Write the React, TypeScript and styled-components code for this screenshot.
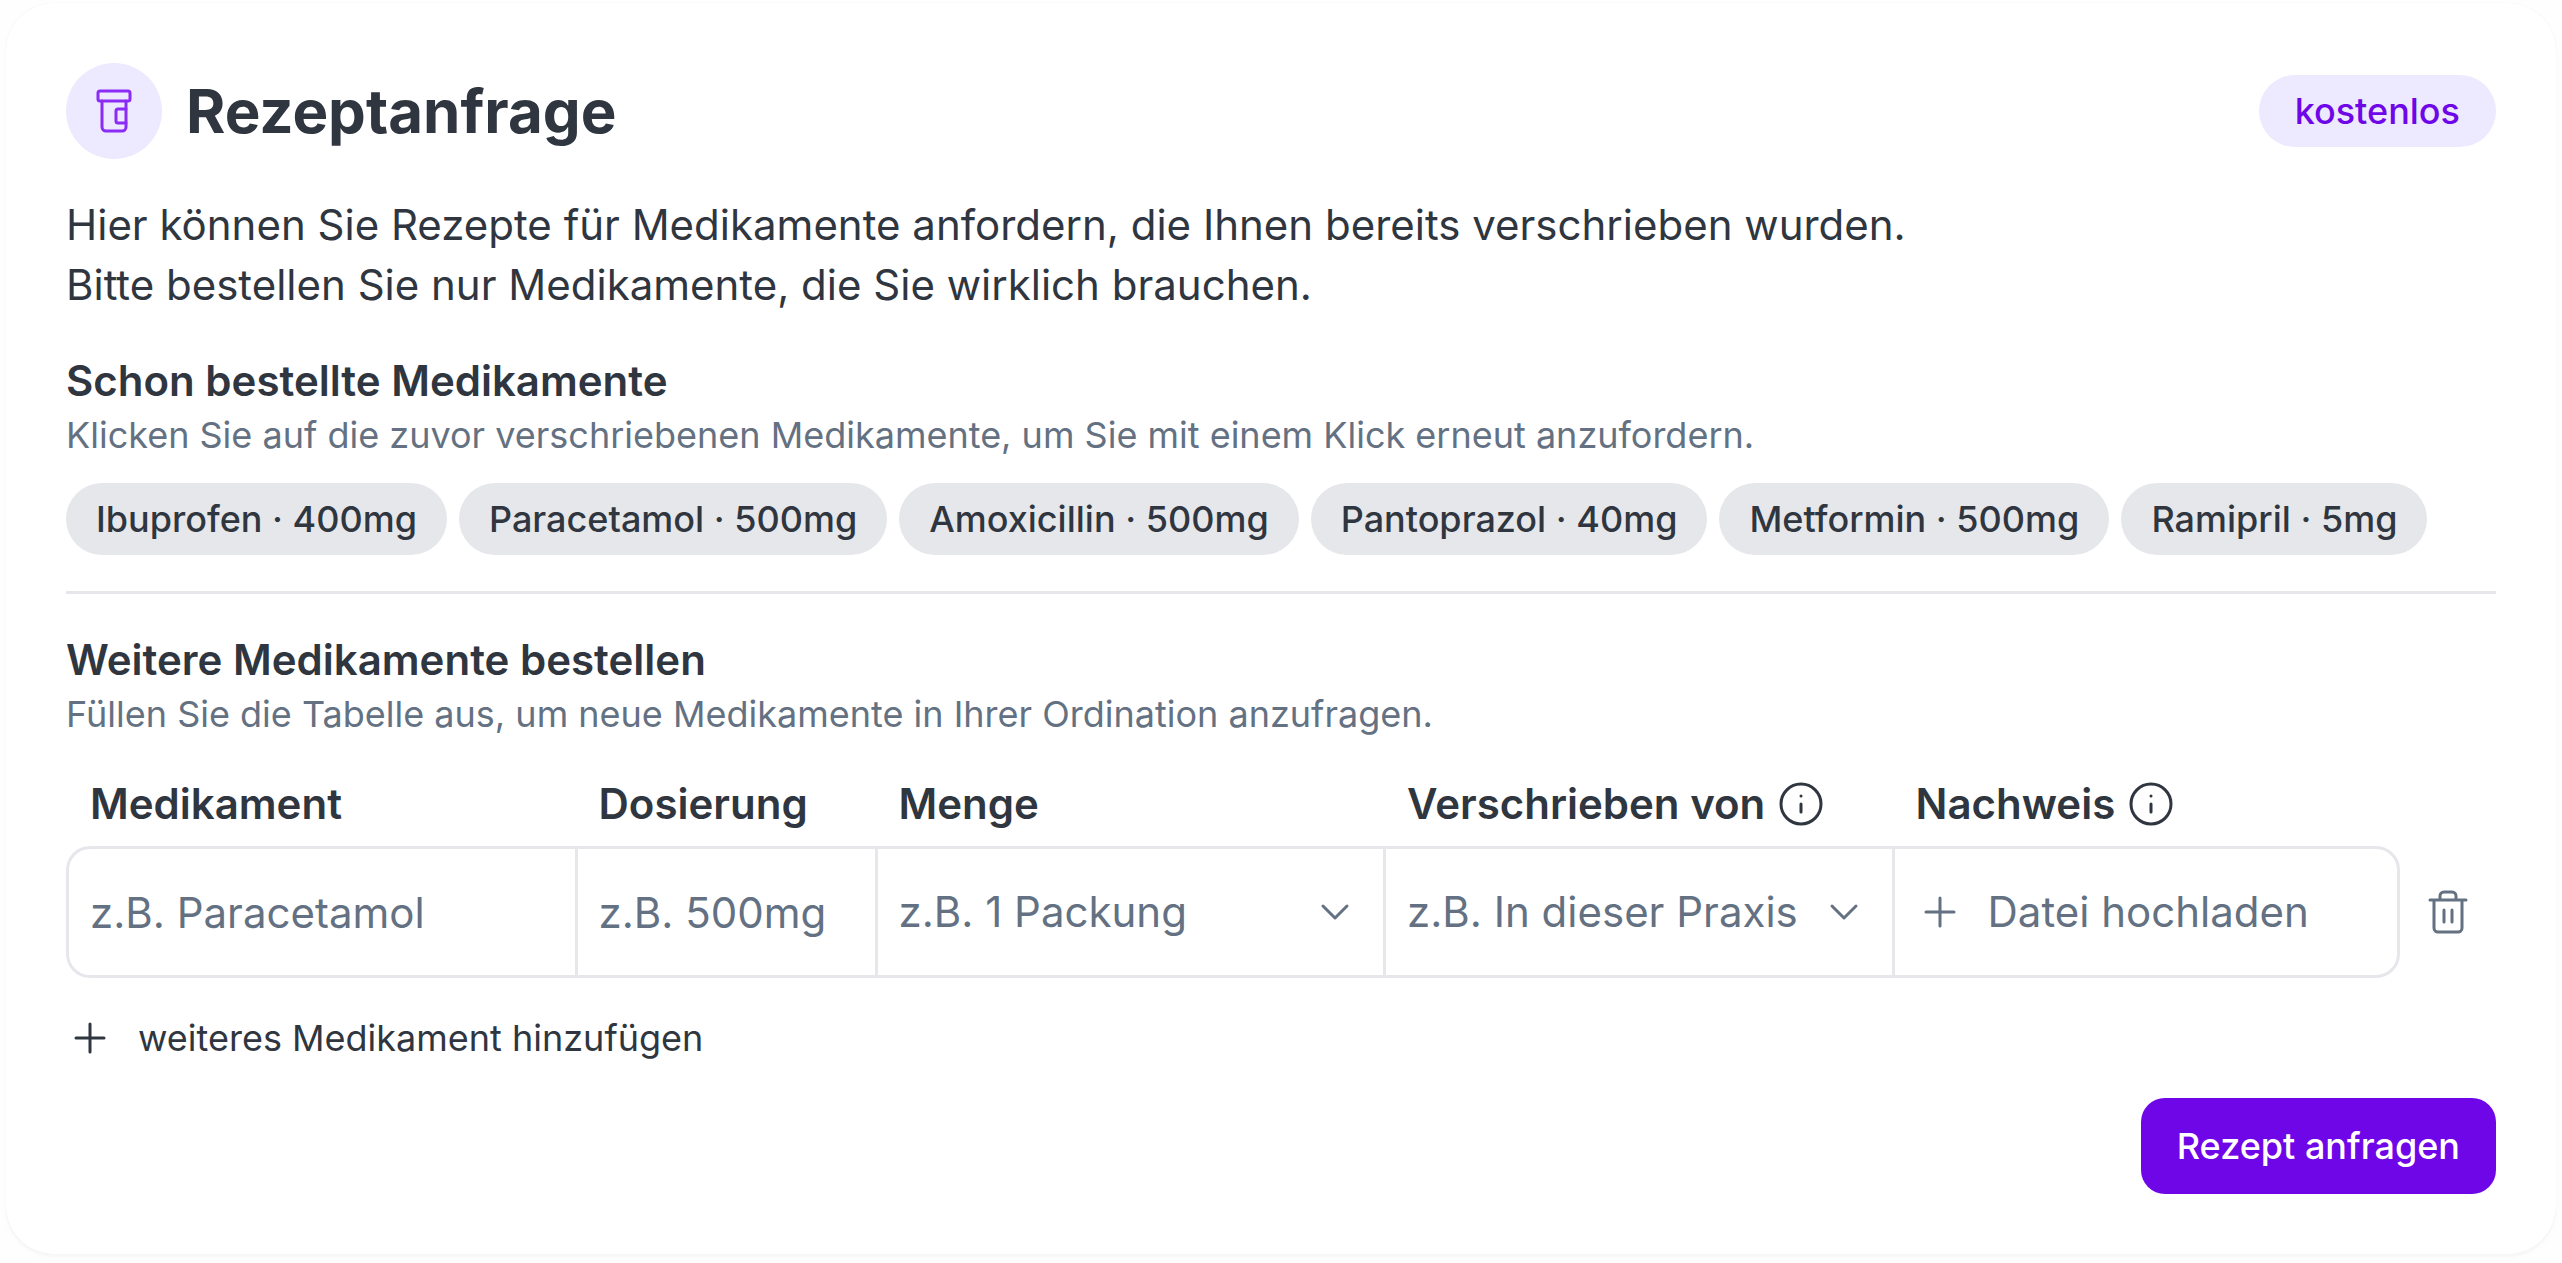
import React from "react";
import styled, { createGlobalStyle } from "styled-components";

const color = {
  text: "#303640",
  muted: "#647182",
  line: "#e6e7eb",
  chip: "#e6e7ea",
  primary: "#6f06e8",
  primaryIcon: "#8b2cf5",
  primarySoft: "#ede9fe",
};

const GlobalStyle = createGlobalStyle`
  *, *::before, *::after { box-sizing: border-box; }
  body {
    margin: 0;
    background: #fefefe;
    color: ${color.text};
    font-family: Inter, "Liberation Sans", sans-serif;
    font-size: 42px;
    line-height: 60px;
  }
  button, input, select {
    font: inherit;
    color: inherit;
    margin: 0;
    padding: 0;
    border: 0;
    background: none;
  }
  button { cursor: pointer; }
`;

const Page = styled.div`
  padding: 3px 6px 9px;
`;

const Card = styled.form`
  display: flex;
  flex-direction: column;
  gap: 36px;
  padding: 60px;
  border-radius: 48px;
  background: #fff;
  box-shadow: 0 0 1px rgba(0, 0, 0, 0.08), 0 3px 0 #f8f8f8, 0 3px 9px rgba(0, 0, 0, 0.02);
`;

const Header = styled.header`
  display: flex;
  align-items: center;
  gap: 24px;
`;

const Badge = styled.span`
  display: flex;
  align-items: center;
  justify-content: center;
  width: 96px;
  height: 96px;
  border-radius: 50%;
  background: ${color.primarySoft};
  color: ${color.primaryIcon};
`;

const Title = styled.h1`
  flex: 1;
  margin: 0;
  font-size: 60px;
  line-height: 72px;
  font-weight: 700;
`;

const PriceTag = styled.span`
  padding: 12px 36px;
  border-radius: 36px;
  background: ${color.primarySoft};
  color: ${color.primary};
  font-size: 36px;
  line-height: 48px;
  font-weight: 500;
`;

const Intro = styled.p`
  margin: 0;
`;

const SectionTitle = styled.h2`
  margin: 0;
  font-size: 42px;
  line-height: 60px;
  font-weight: 600;
`;

const Hint = styled.p`
  margin: 0;
  color: ${color.muted};
  font-size: 36px;
  line-height: 48px;
`;

const Divider = styled.hr`
  width: 100%;
  height: 3px;
  margin: 0;
  border: 0;
  background: ${color.line};
`;

const ChipList = styled.div`
  display: flex;
  flex-wrap: wrap;
  gap: 12px;
  margin-top: 24px;
`;

const Chip = styled.button`
  padding: 12px 30px;
  border-radius: 36px;
  background: ${color.chip};
  font-size: 36px;
  line-height: 48px;
  font-weight: 500;
`;

const Table = styled.table`
  width: 100%;
  margin-top: 36px;
  table-layout: fixed;
  border-collapse: separate;
  border-spacing: 0;
`;

const Column = styled.col<{ $width?: number }>`
  width: ${(p) => (p.$width ? `${p.$width}px` : "auto")};
`;

const HeadCell = styled.th`
  padding: 0 0 12px 24px;
  text-align: left;
  font-weight: 600;
`;

const HeadContent = styled.div`
  display: flex;
  align-items: center;
  gap: 12px;
  white-space: nowrap;
`;

const Cell = styled.td`
  height: 132px;
  padding: 0;
  border: 3px solid ${color.line};
  border-right-width: 0;
  color: ${color.muted};

  &:first-child {
    border-radius: 24px 0 0 24px;
  }
  &:nth-last-child(2) {
    border-right-width: 3px;
    border-radius: 0 24px 24px 0;
  }
`;

const ActionCell = styled.td`
  padding: 0 24px;
  color: ${color.muted};
`;

const TextField = styled.input`
  display: block;
  width: 100%;
  height: 126px;
  padding: 0 21px;

  &::placeholder {
    color: ${color.muted};
    opacity: 1;
  }
`;

const SelectWrap = styled.div`
  display: grid;
  align-items: center;

  > * {
    grid-area: 1 / 1;
  }
  > svg {
    justify-self: end;
    margin-right: 24px;
    pointer-events: none;
  }
`;

const Select = styled.select`
  appearance: none;
  width: 100%;
  height: 126px;
  padding: 0 72px 0 21px;
`;

const UploadButton = styled.button`
  display: flex;
  align-items: center;
  gap: 24px;
  width: 100%;
  height: 126px;
  padding: 0 21px;
  white-space: nowrap;
`;

const IconButton = styled.button`
  display: flex;
`;

const AddButton = styled.button`
  display: flex;
  align-items: center;
  align-self: flex-start;
  gap: 24px;
  font-size: 36px;
  line-height: 48px;
`;

const SubmitButton = styled.button`
  align-self: flex-end;
  padding: 24px 36px;
  border-radius: 24px;
  background: ${color.primary};
  color: #fff;
  font-size: 36px;
  line-height: 48px;
  font-weight: 500;
`;

const IconSvg = styled.svg`
  display: block;
  flex: none;
  width: 48px;
  height: 48px;
  fill: none;
  stroke: currentColor;
  stroke-width: 1.5;
  stroke-linecap: round;
  stroke-linejoin: round;
`;

function Icon({ children }: { children: React.ReactNode }) {
  return (
    <IconSvg viewBox="0 0 24 24" aria-hidden="true">
      {children}
    </IconSvg>
  );
}

const BottleIcon = () => (
  <Icon>
    <path d="M18 11h-4a1 1 0 0 0-1 1v5a1 1 0 0 0 1 1h4" />
    <path d="M6 7v13a2 2 0 0 0 2 2h8a2 2 0 0 0 2-2V7" />
    <rect width="16" height="5" x="4" y="2" rx="1" />
  </Icon>
);

const PlusIcon = () => (
  <Icon>
    <path d="M12 5v14M5 12h14" />
  </Icon>
);

const ChevronIcon = () => (
  <Icon>
    <path d="m6 9 6 6 6-6" />
  </Icon>
);

const InfoIcon = () => (
  <Icon>
    <circle cx="12" cy="12" r="10" />
    <path d="M12 16v-4M12 8h.01" />
  </Icon>
);

const TrashIcon = () => (
  <Icon>
    <path d="M3 6h18M19 6v14a2 2 0 0 1-2 2H7a2 2 0 0 1-2-2V6M8 6V4a2 2 0 0 1 2-2h4a2 2 0 0 1 2 2v2M10 11v6M14 11v6" />
  </Icon>
);

const previous = [
  "Ibuprofen · 400mg",
  "Paracetamol · 500mg",
  "Amoxicillin · 500mg",
  "Pantoprazol · 40mg",
  "Metformin · 500mg",
  "Ramipril · 5mg",
];

const columns = [
  { id: "medikament", label: "Medikament", info: false },
  { id: "dosierung", label: "Dosierung", info: false, width: 300 },
  { id: "menge", label: "Menge", info: false },
  { id: "verschrieben", label: "Verschrieben von", info: true },
  { id: "nachweis", label: "Nachweis", info: true },
];

function SelectField({ id, placeholder }: { id: string; placeholder: string }) {
  return (
    <SelectWrap>
      <Select id={id} defaultValue="">
        <option value="">{placeholder}</option>
      </Select>
      <ChevronIcon />
    </SelectWrap>
  );
}

export default function App() {
  return (
    <Page>
      <GlobalStyle />
      <Card onSubmit={(e) => e.preventDefault()}>
        <Header>
          <Badge>
            <BottleIcon />
          </Badge>
          <Title>Rezeptanfrage</Title>
          <PriceTag>kostenlos</PriceTag>
        </Header>
        <Intro>
          Hier können Sie Rezepte für Medikamente anfordern, die Ihnen bereits verschrieben wurden.
          <br />
          Bitte bestellen Sie nur Medikamente, die Sie wirklich brauchen.
        </Intro>
        <section>
          <SectionTitle>Schon bestellte Medikamente</SectionTitle>
          <Hint>Klicken Sie auf die zuvor verschriebenen Medikamente, um Sie mit einem Klick erneut anzufordern.</Hint>
          <ChipList>
            {previous.map((name) => (
              <Chip key={name} type="button">
                {name}
              </Chip>
            ))}
          </ChipList>
        </section>
        <Divider />
        <section>
          <SectionTitle>Weitere Medikamente bestellen</SectionTitle>
          <Hint>Füllen Sie die Tabelle aus, um neue Medikamente in Ihrer Ordination anzufragen.</Hint>
          <Table>
            <colgroup>
              {columns.map((c) => (
                <Column key={c.id} $width={c.width} />
              ))}
              <Column $width={96} />
            </colgroup>
            <thead>
              <tr>
                {columns.map((c) => (
                  <HeadCell key={c.id} scope="col">
                    <HeadContent>
                      <label htmlFor={c.id}>{c.label}</label>
                      {c.info && (
                        <IconButton type="button" aria-label={`Info: ${c.label}`}>
                          <InfoIcon />
                        </IconButton>
                      )}
                    </HeadContent>
                  </HeadCell>
                ))}
                <td />
              </tr>
            </thead>
            <tbody>
              <tr>
                <Cell>
                  <TextField id="medikament" placeholder="z.B. Paracetamol" />
                </Cell>
                <Cell>
                  <TextField id="dosierung" placeholder="z.B. 500mg" />
                </Cell>
                <Cell>
                  <SelectField id="menge" placeholder="z.B. 1 Packung" />
                </Cell>
                <Cell>
                  <SelectField id="verschrieben" placeholder="z.B. In dieser Praxis" />
                </Cell>
                <Cell>
                  <UploadButton id="nachweis" type="button">
                    <PlusIcon />
                    Datei hochladen
                  </UploadButton>
                </Cell>
                <ActionCell>
                  <IconButton type="button" aria-label="Zeile löschen">
                    <TrashIcon />
                  </IconButton>
                </ActionCell>
              </tr>
            </tbody>
          </Table>
        </section>
        <AddButton type="button">
          <PlusIcon />
          weiteres Medikament hinzufügen
        </AddButton>
        <SubmitButton type="submit">Rezept anfragen</SubmitButton>
      </Card>
    </Page>
  );
}
